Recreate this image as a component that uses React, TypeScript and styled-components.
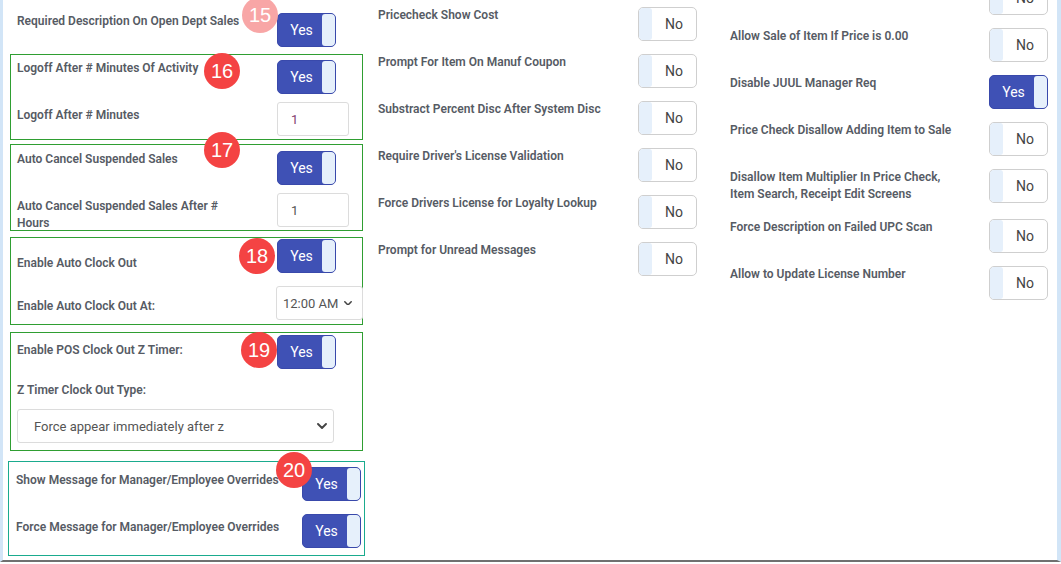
import React from "react";
import styled, { createGlobalStyle } from "styled-components";

const GlobalStyle = createGlobalStyle`
  html, body {
    margin: 0;
    padding: 0;
    background: #fff;
  }
  body {
    font-family: Roboto, "Liberation Sans", Arial, sans-serif;
  }
  * {
    box-sizing: border-box;
  }
`;

const Frame = styled.div`
  width: 1061px;
  height: 562px;
  border-left: 3px solid #d2e5f7;
  border-right: 4px solid #d2e5f7;
  border-bottom: 2px solid #707070;
  background: #fff;
  overflow: hidden;
  display: grid;
  grid-template-columns: 367px 352px 1fr;
  align-items: start;
`;

const LeftCol = styled.div`
  display: flex;
  flex-direction: column;
  padding: 12px 0 0 7px;
`;

const ListCol = styled.div<{ $pad: string; $shift?: number }>`
  display: flex;
  flex-direction: column;
  padding: ${(p) => p.$pad};
  margin-top: ${(p) => p.$shift ?? 0}px;
`;

const Group = styled.div<{
  $line?: string;
  $pad: string;
  $gap?: number;
  $shift?: number;
  $width?: number;
}>`
  position: relative;
  width: ${(p) => p.$width ?? 353}px;
  margin-top: ${(p) => p.$gap ?? 0}px;
  margin-left: ${(p) => p.$shift ?? 0}px;
  border: 1px solid ${(p) => p.$line ?? "transparent"};
  padding: ${(p) => p.$pad};
`;

const SettingRow = styled.div<{ $labelCol?: number; $gap?: number }>`
  display: grid;
  grid-template-columns: ${(p) => p.$labelCol ?? 260}px auto;
  align-items: start;
  height: 34px;
  margin-top: ${(p) => p.$gap ?? 0}px;
`;

const Label = styled.div<{ $top?: number; $max?: number; $nowrap?: boolean }>`
  margin-top: ${(p) => p.$top ?? 0}px;
  max-width: ${(p) => (p.$max ? `${p.$max}px` : "none")};
  min-height: 17px;
  font-size: 12px;
  line-height: 17px;
  font-weight: 600;
  color: #565b64;
  white-space: ${(p) => (p.$nowrap ? "nowrap" : "normal")};
`;

const PlainLabel = styled(Label)`
  margin-top: 13px;
  margin-bottom: 10px;
`;

const ListLabel = styled(Label)`
  padding-bottom: 3px;
`;

const Line = styled.div`
  display: flex;
  justify-content: space-between;
  align-items: flex-start;
  margin-bottom: 13px;
`;

const ToggleBox = styled.div<{ $on: boolean }>`
  width: 59px;
  height: 34px;
  display: flex;
  flex-direction: ${(p) => (p.$on ? "row" : "row-reverse")};
  border: 1px solid ${(p) => (p.$on ? "#3949ab" : "#cfcfcf")};
  background: ${(p) => (p.$on ? "#3f51b5" : "#fff")};
  border-radius: 5px;
  overflow: hidden;
  flex-shrink: 0;
`;

const ToggleText = styled.span<{ $on: boolean }>`
  flex: 1;
  display: flex;
  align-items: center;
  justify-content: center;
  padding-left: ${(p) => (p.$on ? 3 : 0)}px;
  font-size: 14px;
  color: ${(p) => (p.$on ? "#fff" : "#444")};
`;

const Knob = styled.span`
  width: 13px;
  background: #e6f0fb;
  border-radius: 3px;
`;

const TextInput = styled.div<{ $tint?: string }>`
  width: 72px;
  height: 34px;
  display: flex;
  align-items: center;
  padding-left: 13px;
  border: 1px solid #dcdcdc;
  border-radius: 3px;
  font-size: 13px;
  color: ${(p) => p.$tint ?? "#555"};
`;

const SelectBox = styled.div<{ $width: number; $left: number; $right: number; $size: number; $shift?: number }>`
  width: ${(p) => p.$width}px;
  height: 34px;
  margin-left: ${(p) => p.$shift ?? 0}px;
  display: flex;
  align-items: center;
  justify-content: space-between;
  padding: 0 ${(p) => p.$right}px 0 ${(p) => p.$left}px;
  border: 1px solid #dcdcdc;
  border-radius: 3px;
  background: #fff;
  font-size: ${(p) => p.$size}px;
  color: #555;
  white-space: nowrap;
`;

const Badge = styled.span<{ $x: number; $y: number; $faded?: boolean }>`
  position: absolute;
  left: ${(p) => p.$x}px;
  top: ${(p) => p.$y}px;
  width: 36px;
  height: 36px;
  border-radius: 50%;
  background: ${(p) => (p.$faded ? "#f8a6a6" : "#f44343")};
  color: #fff;
  font-family: "Liberation Sans", Arial, sans-serif;
  font-size: 20px;
  display: flex;
  align-items: center;
  justify-content: center;
  z-index: 2;
`;

function Toggle({ on }: { on: boolean }) {
  return (
    <ToggleBox $on={on}>
      <ToggleText $on={on}>{on ? "Yes" : "No"}</ToggleText>
      <Knob />
    </ToggleBox>
  );
}

function Chevron({ size }: { size: number }) {
  return (
    <svg width={size} height={size * 0.6} viewBox="0 0 10 6" fill="none">
      <path d="M1 1 L5 5 L9 1" stroke="#444" strokeWidth="1.9" strokeLinecap="round" strokeLinejoin="round" />
    </svg>
  );
}

const middle = [
  { label: "Pricecheck Show Cost", on: false },
  { label: "Prompt For Item On Manuf Coupon", on: false },
  { label: "Substract Percent Disc After System Disc", on: false },
  { label: "Require Driver's License Validation", on: false },
  { label: "Force Drivers License for Loyalty Lookup", on: false },
  { label: "Prompt for Unread Messages", on: false },
];

// first row is scrolled above the top edge, only its toggle shows
const right = [
  { label: "", on: false },
  { label: "Allow Sale of Item If Price is 0.00", on: false },
  { label: "Disable JUUL Manager Req", on: true },
  { label: "Price Check Disallow Adding Item to Sale", on: false },
  { label: "Disallow Item Multiplier In Price Check, Item Search, Receipt Edit Screens", on: false },
  { label: "Force Description on Failed UPC Scan", on: false },
  { label: "Allow to Update License Number", on: false },
];

export default function App() {
  return (
    <>
      <GlobalStyle />
      <Frame>
        <LeftCol>
          <Group $pad="0 0 0 6px">
            <Badge $x={231} $y={-16} $faded>15</Badge>
            <SettingRow>
              <Label $max={235}>Required Description On Open Dept Sales</Label>
              <Toggle on />
            </SettingRow>
          </Group>

          <Group $line="#2f9e32" $pad="5px 0 3px 6px" $gap={6}>
            <Badge $x={193} $y={-2}>16</Badge>
            <SettingRow>
              <Label $max={235}>Logoff After # Minutes Of Activity</Label>
              <Toggle on />
            </SettingRow>
            <SettingRow $gap={8}>
              <Label $top={5} $max={235}>Logoff After # Minutes</Label>
              <TextInput $tint="#844070">1</TextInput>
            </SettingRow>
          </Group>

          <Group $line="#2f9e32" $pad="6px 0 3px 6px" $gap={4}>
            <Badge $x={193} $y={-13}>17</Badge>
            <SettingRow>
              <Label $max={235}>Auto Cancel Suspended Sales</Label>
              <Toggle on />
            </SettingRow>
            <SettingRow $gap={8}>
              <Label $top={5} $max={235}>Auto Cancel Suspended Sales After # Hours</Label>
              <TextInput>1</TextInput>
            </SettingRow>
          </Group>

          <Group $line="#2f9e32" $pad="1px 0 4px 6px" $gap={6}>
            <Badge $x={228} $y={0}>18</Badge>
            <SettingRow>
              <Label $top={16} $max={235}>Enable Auto Clock Out</Label>
              <Toggle on />
            </SettingRow>
            <SettingRow $gap={13}>
              <Label $top={12} $max={235}>Enable Auto Clock Out At:</Label>
              <SelectBox $width={87} $left={6} $right={10} $size={13} $shift={-1}>
                <span>12:00 AM</span>
                <Chevron size={8} />
              </SelectBox>
            </SettingRow>
          </Group>

          <Group $line="#2f9e32" $pad="2px 0 7px 6px" $gap={7}>
            <Badge $x={230} $y={-1}>19</Badge>
            <SettingRow>
              <Label $top={7} $max={235}>Enable POS Clock Out Z Timer:</Label>
              <Toggle on />
            </SettingRow>
            <PlainLabel>Z Timer Clock Out Type:</PlainLabel>
            <SelectBox $width={317} $left={16} $right={6} $size={13}>
              <span>Force appear immediately after z</span>
              <Chevron size={10} />
            </SelectBox>
          </Group>

          <Group $line="#1aab8e" $pad="5px 0 7px 7px" $gap={10} $shift={-2} $width={357}>
            <Badge $x={267} $y={-10}>20</Badge>
            <SettingRow $labelCol={286}>
              <Label $top={5} $nowrap>Show Message for Manager/Employee Overrides</Label>
              <Toggle on />
            </SettingRow>
            <SettingRow $labelCol={286} $gap={13}>
              <Label $top={5} $nowrap>Force Message for Manager/Employee Overrides</Label>
              <Toggle on />
            </SettingRow>
          </Group>
        </LeftCol>

        <ListCol $pad="7px 25px 0 8px">
          {middle.map((row) => (
            <Line key={row.label}>
              <ListLabel>{row.label}</ListLabel>
              <Toggle on={row.on} />
            </Line>
          ))}
        </ListCol>

        <ListCol $pad="0 9px 0 8px" $shift={-19}>
          {right.map((row, i) => (
            <Line key={i}>
              <ListLabel $max={230}>{row.label}</ListLabel>
              <Toggle on={row.on} />
            </Line>
          ))}
        </ListCol>
      </Frame>
    </>
  );
}
